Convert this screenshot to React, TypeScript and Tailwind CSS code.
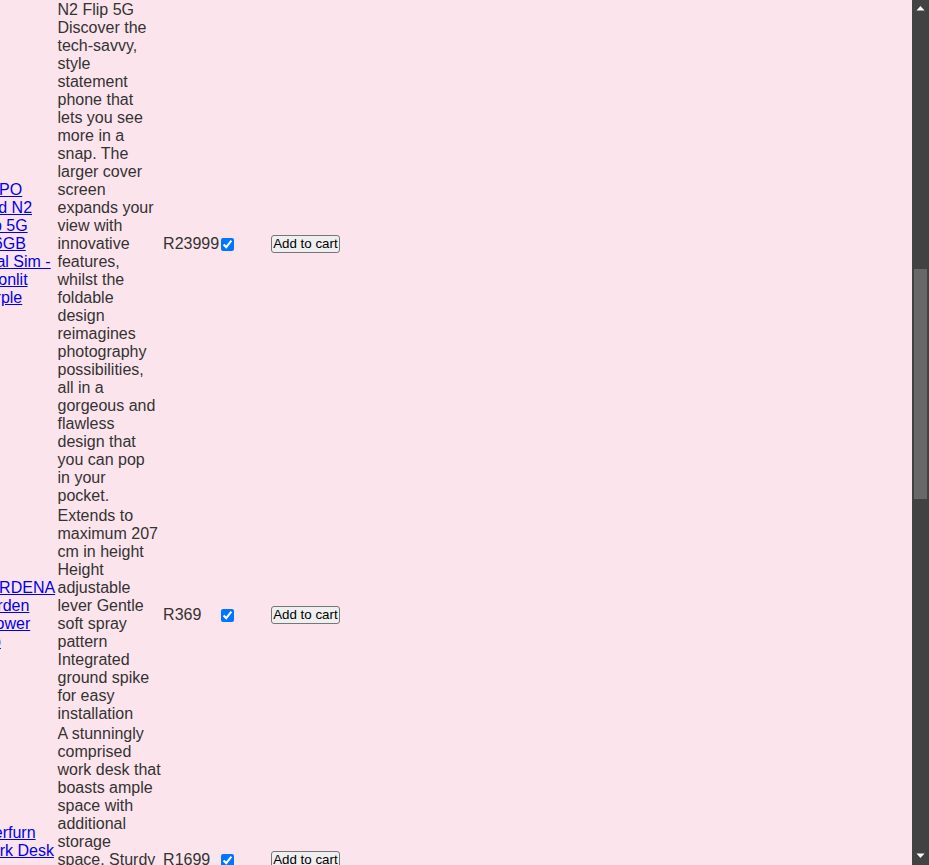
import { useEffect, useRef } from "react";

interface Product {
  id: number;
  name: string;
  description: string;
  price: number;
}

const products: Product[] = [
  {
    id: 1,
    name: "OPPO Find N2 Flip 5G 256GB Dual Sim - Moonlit Purple",
    description:
      "OPPO Find N2 Flip 5G Discover the tech-savvy, style statement phone that lets you see more in a snap. The larger cover screen expands your view with innovative features, whilst the foldable design reimagines photography possibilities, all in a gorgeous and flawless design that you can pop in your pocket.",
    price: 23999,
  },
  {
    id: 2,
    name: "GARDENA Garden Shower Pro",
    description:
      "Extends to maximum 207 cm in height Height adjustable lever Gentle soft spray pattern Integrated ground spike for easy installation",
    price: 369,
  },
  {
    id: 3,
    name: "Interfurn Work Desk with Drawers",
    description:
      "A stunningly comprised work desk that boasts ample space with additional storage space. Sturdy and durable, this desk features a modern design that suits any home office.",
    price: 1699,
  },
];

// dark window scrollbar drawn over the right edge
const ScrollBar = () => (
  <div className="fixed top-0 right-0 h-screen w-[17px] bg-[#424242] flex flex-col items-center">
    <svg width="17" height="17" viewBox="0 0 17 17" className="shrink-0">
      <polygon points="4.5,10.5 12.5,10.5 8.5,6" fill="#ffffff" />
    </svg>
    <div className="flex-1 w-full px-[2px]">
      <div className="mt-[252px] h-[230px] bg-[#686868]"></div>
    </div>
    <svg width="17" height="17" viewBox="0 0 17 17" className="shrink-0">
      <polygon points="4.5,5.5 12.5,5.5 8.5,10" fill="#ffffff" />
    </svg>
  </div>
);

const App = () => {
  const scrollRef = useRef<HTMLDivElement>(null);

  // page is shown part way down the list
  useEffect(() => {
    if (scrollRef.current) {
      scrollRef.current.scrollTop = 947;
    }
  }, []);

  return (
    <div className="relative">
      <div
        ref={scrollRef}
        className="h-screen overflow-y-scroll overflow-x-hidden bg-[#fce4ec]"
      >
        <div className="text-[#333333] text-base leading-[18px] font-['Liberation_Sans',Arial,sans-serif]">
          <div className="h-[929px]" aria-hidden="true"></div>

          <table className="table-fixed -ml-[25px] w-[366px]">
            <colgroup>
              <col className="w-[81.5px]" />
              <col className="w-[105.6px]" />
              <col className="w-[58.1px]" />
              <col className="w-[50px]" />
              <col className="w-[70.8px]" />
            </colgroup>
            <tbody>
              {products.map((p) => (
                <tr key={p.id}>
                  <td className="p-px align-middle">
                    <a href="#" className="text-[#0000ee] underline">
                      {p.name}
                    </a>
                  </td>
                  <td className="p-px align-middle">{p.description}</td>
                  <td className="p-px align-middle">R{p.price}</td>
                  <td className="p-px align-middle">
                    <input
                      type="checkbox"
                      defaultChecked
                      className="align-middle"
                    />
                  </td>
                  <td className="p-px align-middle">
                    <button className="h-[18px] px-px border border-[#767676] rounded-[3px] bg-[#efefef] text-black text-[13.33px] leading-[14px] align-middle font-['Liberation_Sans',Arial,sans-serif]">
                      Add to cart
                    </button>
                  </td>
                </tr>
              ))}
            </tbody>
          </table>

          <div className="h-[1182px]" aria-hidden="true"></div>
        </div>
      </div>
      <ScrollBar />
    </div>
  );
};

export default App;
